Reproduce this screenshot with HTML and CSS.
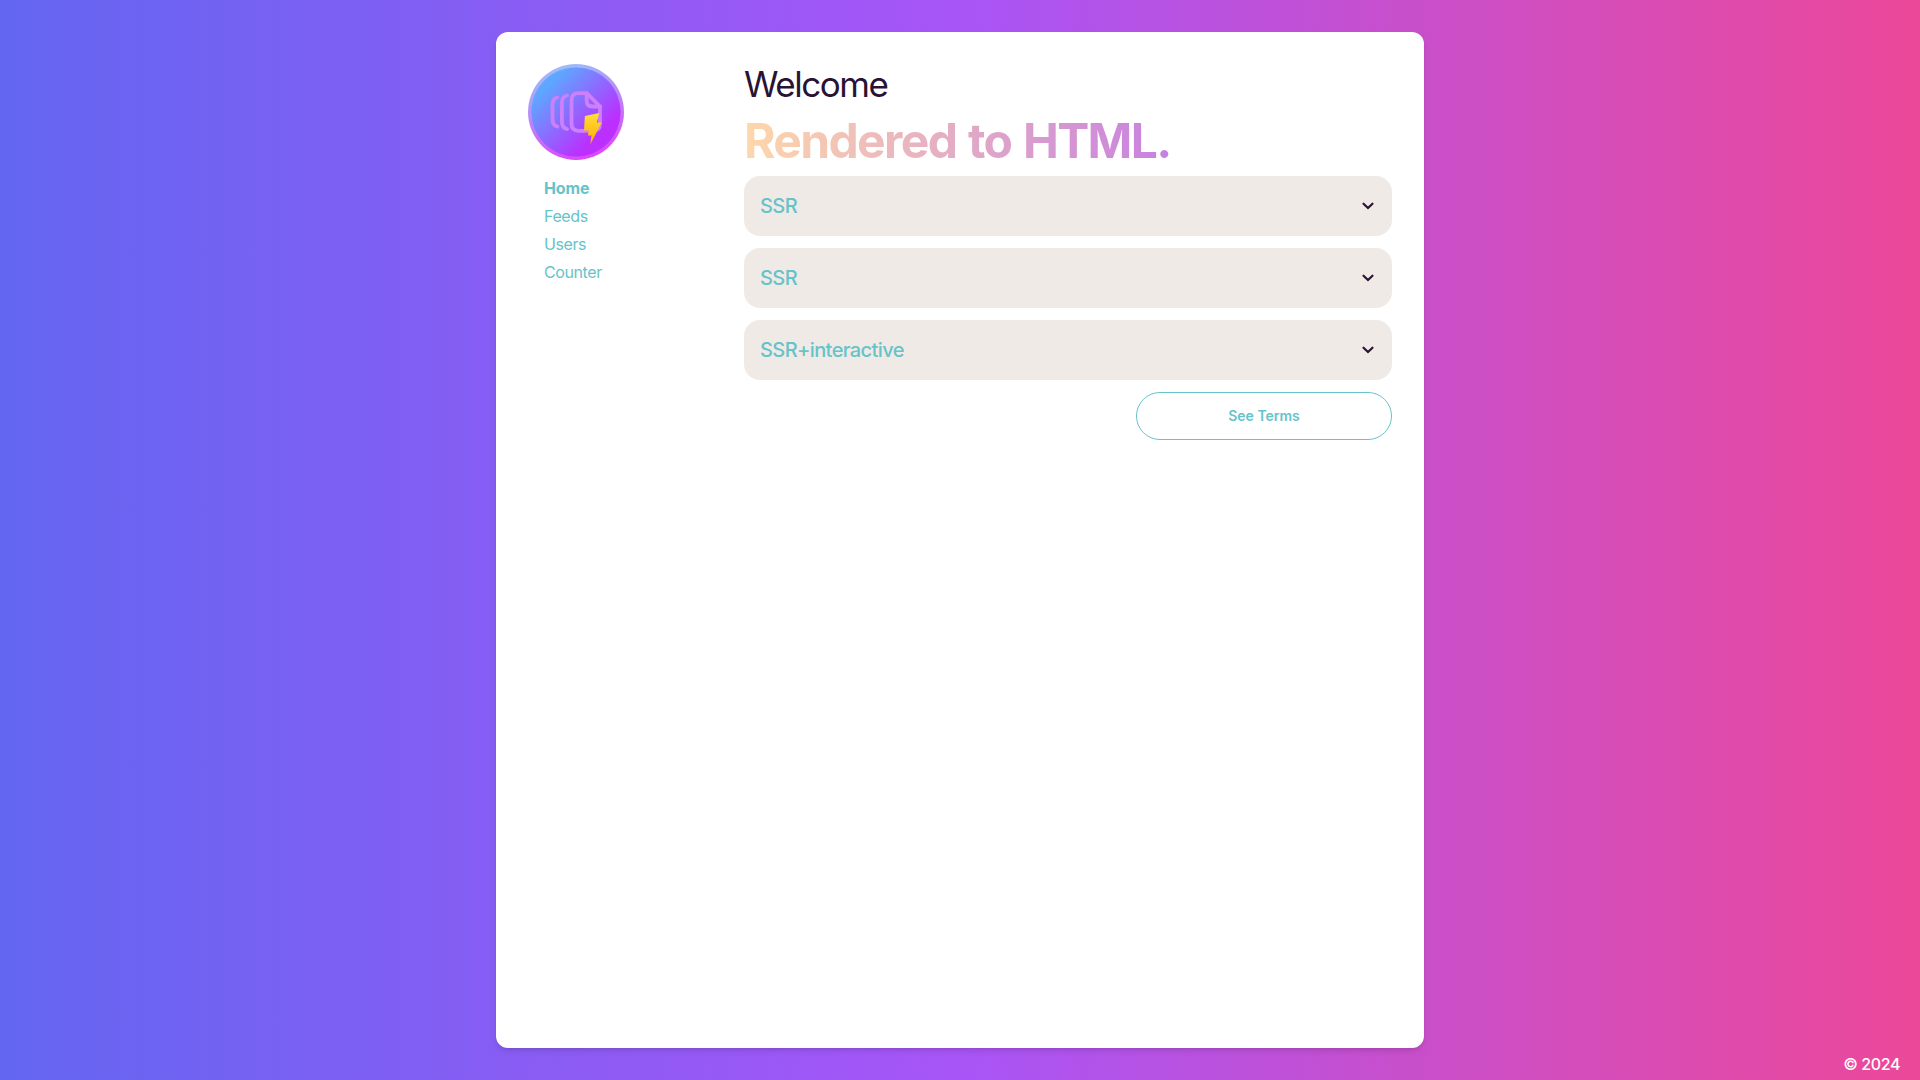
FILE: index.html
```html
<!DOCTYPE html>
<html lang="en">
<head>
<meta charset="utf-8">
<title>Welcome</title>
<link rel="stylesheet" href="styles.css">
</head>
<body>
<div class="card">
  <aside class="sidebar">
    <svg class="logo" viewBox="0 0 96 96" aria-hidden="true">
      <defs>
        <linearGradient id="disc" x1="0.15" y1="0.15" x2="0.75" y2="0.75"><stop offset="0.08" stop-color="#5ea6ff"/><stop offset="1" stop-color="#bb30ff"/></linearGradient>
        <linearGradient id="rim" x1="0.3" y1="0" x2="0.6" y2="1"><stop offset="0" stop-color="#9cc0f8"/><stop offset="1" stop-color="#de45fc"/></linearGradient>
        <linearGradient id="bolt" x1="0" y1="0" x2="0" y2="1"><stop offset="0" stop-color="#ffe03a"/><stop offset="1" stop-color="#ffa800"/></linearGradient>
      </defs>
      <circle cx="48" cy="48" r="48" fill="url(#rim)"/>
      <circle cx="48" cy="48" r="44.6" fill="url(#disc)"/>
      <g fill="none" stroke="#cd80fc" stroke-width="3.8" stroke-linecap="round" stroke-linejoin="round">
        <path d="M29.300 33.500Q24.500 34.500 24.500 41V55Q24.500 61.500 29.300 62.500"/>
        <path d="M39 31.500Q33.900 32.500 33.900 39V57.500Q33.900 64 39 65"/>
        <path d="M58.700 29.200H50.500Q43.500 29.200 43.500 36.500V59.500Q43.500 66.800 50.500 66.800H65Q72 66.800 72 59.500V42.500Z"/>
        <path d="M58.700 29.200V37Q58.700 42.500 64.500 42.500H72"/>
      </g>
      <path fill="url(#bolt)" d="M56.900 51.900L71.300 49L68.900 58.600H73.700L62.300 80.500L63.500 71.500H60L60.700 66.500H56Z"/>
    </svg>
    <nav class="nav">
      <a class="link active">Home</a>
      <a class="link">Feeds</a>
      <a class="link">Users</a>
      <a class="link">Counter</a>
    </nav>
  </aside>
  <main class="content">
    <h1 class="title">Welcome</h1>
    <h2 class="headline">Rendered to HTML.</h2>
    <div class="panels">
      <div class="panel"><span>SSR</span><svg class="chevron" viewBox="0 0 16 16"><path d="M3.500 5.700L8 10L12.500 5.700"/></svg></div>
      <div class="panel"><span>SSR</span><svg class="chevron" viewBox="0 0 16 16"><path d="M3.500 5.700L8 10L12.500 5.700"/></svg></div>
      <div class="panel"><span>SSR+interactive</span><svg class="chevron" viewBox="0 0 16 16"><path d="M3.500 5.700L8 10L12.500 5.700"/></svg></div>
      <button class="terms">See Terms</button>
    </div>
  </main>
</div>
<footer class="footer">© 2024</footer>
</body>
</html>
```
FILE: styles.css
```css
* { box-sizing: border-box; }
body {
  margin: 0;
  height: 100vh;
  overflow: hidden;
  display: flex;
  flex-direction: column;
  align-items: center;
  padding-top: 32px;
  font-family: Inter, sans-serif;
  font-size: 16px;
  background: linear-gradient(to right, #6366f1, #a855f7, #ec4899);
}
.card {
  display: flex;
  flex: none;
  width: 928px;
  height: 1016px;
  padding: 32px;
  border-radius: 12px;
  background: #fff;
  box-shadow: 0 4px 6px -1px rgba(0,0,0,.1), 0 2px 4px -2px rgba(0,0,0,.1);
}
.sidebar { width: 216px; flex: none; }
.logo { display: block; width: 96px; height: 96px; }
.nav {
  display: flex;
  flex-direction: column;
  gap: 4px;
  padding: 16px;
}
.link { line-height: 24px; letter-spacing: -0.4px; color: #66c3c9; }
.active { font-weight: 700; letter-spacing: -0.1px; }
.content { flex: 1; }
.title {
  margin: 0;
  font-size: 35px;
  line-height: 40px;
  font-weight: 430;
  letter-spacing: -1.45px;
  color: #291334;
}
.headline {
  width: fit-content;
  margin: 13px 0 11px;
  font-size: 48px;
  line-height: 48px;
  font-weight: 700;
  letter-spacing: -1.65px;
  word-spacing: 2px;
  color: transparent;
  background: linear-gradient(to right, #fed7aa, #c780e0);
  background-clip: text;
  -webkit-background-clip: text;
}
.panels { display: flex; flex-direction: column; gap: 12px; }
.panel {
  display: flex;
  align-items: center;
  justify-content: space-between;
  height: 60px;
  padding: 0 16px;
  border-radius: 16px;
  background: #efeae6;
  color: #66c3c9;
  font-size: 20px;
  font-weight: 500;
  letter-spacing: -0.6px;
}
.chevron {
  width: 16px;
  height: 16px;
  fill: none;
  stroke: #291334;
  stroke-width: 2.2;
  stroke-linecap: round;
}
.terms {
  align-self: flex-end;
  width: 256px;
  height: 48px;
  border: 1px solid #66c3c9;
  border-radius: 24px;
  background: transparent;
  color: #66c3c9;
  font: 600 14px/14px Inter, sans-serif;
}
.footer {
  align-self: flex-end;
  padding: 4px 20px 0;
  line-height: 24px;
  font-weight: 500;
  letter-spacing: -0.4px;
  color: #fff;
}
```
